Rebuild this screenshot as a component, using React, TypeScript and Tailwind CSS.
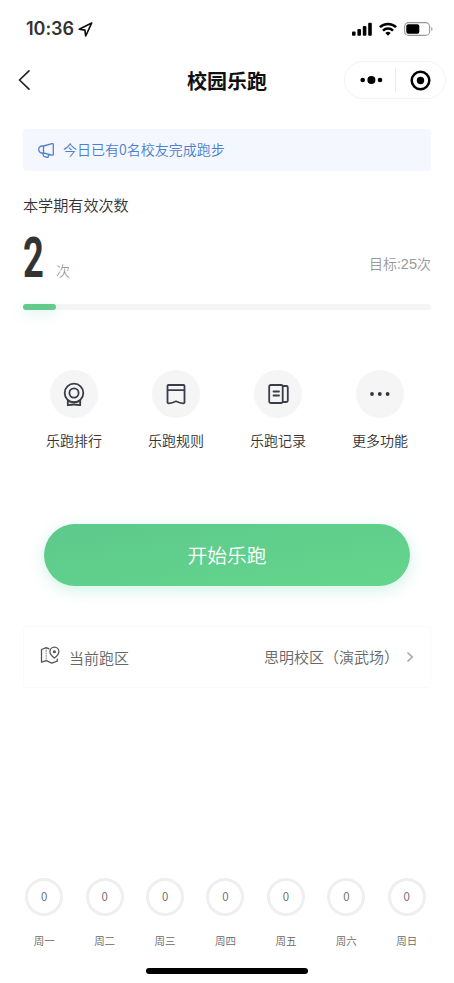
import React from 'react';

const actions = [
  {
    label: '乐跑排行',
    icon: (
      <>
        <circle cx="12" cy="11" r="9.300" />
        <circle cx="12" cy="11" r="4.600" />
        <path d="M5.800 18.500v4.800c4-1 8.400-1 12.400 0v-4.800M6 19.200c3.800 1.300 8.200 1.300 12 0" />
      </>
    ),
  },
  {
    label: '乐跑规则',
    icon: (
      <path d="M4.500 3h15q1 0 1 1v16q0 1.500-1.500 1.300c-2.800 0-4.500-.8-7-2-2.500 1.200-4.200 2-7 2q-1.500.2-1.500-1.300V4q0-1 1-1zM3.500 8.200h17" />
    ),
  },
  {
    label: '乐跑记录',
    icon: (
      <>
        <rect x="3.200" y="3" width="13.500" height="18" rx="1.500" />
        <path d="M7.500 9.500h5.500M7.500 13.500h5.500M17 4h3.300a1.500 1.500 0 0 1 1.500 1.500v13a1.500 1.500 0 0 1-1.500 1.500H17" />
      </>
    ),
  },
  {
    label: '更多功能',
    icon: (
      <g fill="#34363f" stroke="none">
        <circle cx="4" cy="12" r="1.900" />
        <circle cx="11.800" cy="12" r="1.900" />
        <circle cx="19.600" cy="12" r="1.900" />
      </g>
    ),
  },
];

const week = ['周一', '周二', '周三', '周四', '周五', '周六', '周日'];

const StatusBar: React.FC = () => (
  <div className="flex h-14 items-center justify-between pl-[26px] pr-[21px] pt-[2px]">
    <div className="flex items-center gap-1">
      <span className="font-['Inter'] text-[18px] font-semibold leading-none tracking-[-0.05px]">10:36</span>
      <svg width="15" height="15" viewBox="0 0 15 15" fill="none" stroke="#111" strokeWidth="1.700" strokeLinejoin="round">
        <path d="M13.700 1 1.200 7.200l5.700 1 .8 5.800z" />
      </svg>
    </div>
    <div className="flex items-center gap-[7px]">
      <svg width="20" height="14" viewBox="0 0 20 14" fill="#000">
        <rect x="0" y="9.500" width="3.600" height="4.300" rx="1" />
        <rect x="5.400" y="7" width="3.600" height="6.800" rx="1" />
        <rect x="10.800" y="4" width="3.600" height="9.800" rx="1" />
        <rect x="16.200" y=".7" width="3.600" height="13.100" rx="1" />
      </svg>
      <svg width="18" height="14" viewBox="0 0 18 14" fill="none" stroke="#000" strokeWidth="2.500">
        <path d="M.9 5.200a11.600 11.600 0 0 1 16.200 0M4 8.600a7.200 7.200 0 0 1 10 0" />
        <path d="M6.300 11.100a3.900 3.900 0 0 1 5.400 0L9 13.800z" fill="#000" stroke="none" />
      </svg>
      <svg width="29" height="14" viewBox="0 0 29 14" fill="none">
        <rect x=".6" y=".6" width="25" height="12.800" rx="4" stroke="#999" strokeWidth="1.100" />
        <rect x="2.300" y="2.300" width="13" height="9.400" rx="2" fill="#000" />
        <path d="M27.300 4.800c1.600.8 1.600 3.600 0 4.400z" fill="#999" />
      </svg>
    </div>
  </div>
);

const NavBar: React.FC = () => (
  <div className="grid h-12 grid-cols-[102px_1fr_102px] items-center px-2">
    <svg className="ml-[10px]" width="13" height="22" viewBox="0 0 13 22" fill="none" stroke="#222" strokeWidth="1.700" strokeLinecap="round" strokeLinejoin="round">
      <path d="M11 1.800 1.500 11l9.500 9.200" />
    </svg>
    <h1 className="pt-[2px] text-center text-[20px] font-bold leading-none text-[#111]">校园乐跑</h1>
    <div className="flex h-[38px] items-center rounded-full border border-[#f3f3f3]">
      <svg className="ml-[15px]" width="23" height="10" viewBox="0 0 23 10">
        <circle cx="2.700" cy="5" r="2.300" />
        <circle cx="11.400" cy="5" r="4" />
        <circle cx="20" cy="5" r="2.300" />
      </svg>
      <div className="ml-[12px] h-[24px] w-px bg-[#ececec]" />
      <svg className="ml-[14px]" width="21" height="21" viewBox="0 0 21 21">
        <circle cx="10.500" cy="10.500" r="8.800" fill="none" stroke="#000" strokeWidth="2.500" />
        <circle cx="10.500" cy="10.500" r="3.700" />
      </svg>
    </div>
  </div>
);

const App: React.FC = () => {
  return (
    <div className="flex h-[983px] w-[454px] flex-col overflow-hidden bg-white font-['Noto_Sans_CJK_SC',sans-serif] text-[#333]">
      <StatusBar />
      <NavBar />

      {/* Notice */}
      <div className="mx-[23px] mt-[25px] flex h-[42px] items-center rounded bg-[#f4f8fe] pl-[15px] text-[#4d7ed0]">
        <svg width="17" height="17" viewBox="0 0 17 17" fill="none" stroke="currentColor" strokeWidth="1.300" strokeLinejoin="round" strokeLinecap="round">
          <path d="M5.500 4 14 1.600q1.300-.2 1.300 1v9.600q0 1.200-1.300.9L5.500 11H4.200a3.500 3.500 0 0 1 0-7zM5.500 4v7M4.700 11.200l.7 2.400q.3.900 1.200 1.100l2.600.7q1 .2 1.100-.7l.3-2.200" />
        </svg>
        <span className="ml-2 pb-[2px] text-[14px] font-[350] leading-none">今日已有0名校友完成跑步</span>
      </div>

      {/* Semester progress */}
      <div className="mx-[23px] mt-[23px] h-[20px] text-[15.1px] font-[350] leading-[20px]">本学期有效次数</div>
      <div className="mx-[23px] mt-[15px] flex h-[58px] items-end justify-between text-[#999]">
        <div className="flex items-end">
          <span className="w-[33px] origin-left scale-x-[0.66] pb-px font-['Roboto'] text-[55px] font-bold leading-[55px] text-[#333]">2</span>
          <span className="pb-[7px] text-[14px] font-light leading-[20px] text-[#888]">次</span>
        </div>
        <span className="pb-[13px] text-[14px] font-[350] leading-[20px]">
          目标:<span className="font-['Liberation_Sans'] text-[14.5px]">25</span>次
        </span>
      </div>
      <div className="mx-[23px] mt-[17px] h-[6px] rounded-full bg-[#f5f5f5]">
        <div className="h-[6px] w-[8%] rounded-full bg-[#62cb8b] shadow-[0_4px_12px_rgba(98,203,160,0.25)]" />
      </div>

      {/* Shortcuts */}
      <div className="mx-[23px] mt-[60px] grid grid-cols-4">
        {actions.map((item) => (
          <div key={item.label} className="flex flex-col items-center">
            <div className="flex h-12 w-12 items-center justify-center rounded-full bg-[#f5f5f5]">
              <svg width="24" height="24" viewBox="0 0 24 24" fill="none" stroke="#3a3c49" strokeWidth="1.800" strokeLinejoin="round" strokeLinecap="round">
                {item.icon}
              </svg>
            </div>
            <span className="mt-[12px] text-[14px] font-[350] leading-[20px]">{item.label}</span>
          </div>
        ))}
      </div>

      <button className="mx-[44px] mt-[74px] h-[62px] shrink-0 rounded-full bg-gradient-to-br from-[#5dc98c] to-[#65d58c] text-[19.8px] font-[350] leading-none text-white shadow-[0_4px_16px_rgba(90,210,165,0.28)]">
        开始乐跑
      </button>

      {/* Running area */}
      <div className="mx-[23px] mt-[40px] flex h-[62px] items-center rounded-[3px] border border-[#fafafa] pl-[16px] pr-[16px] text-[15px] font-[350] leading-none text-[#666]">
        <svg className="mb-[3px]" width="21" height="19" viewBox="0 0 21 19" fill="none" stroke="#555" strokeWidth="1.300" strokeLinejoin="round" strokeLinecap="round">
          <path d="M9 2.800 6.200 1.700 1.500 3.500v12.700l4.800-1.600 5.500 2.500 5.500-1.900v-2" />
          <path d="M6.200 2v12.300" strokeWidth=".7" strokeDasharray="1 1.500" />
          <path d="M14.400 12c-2.800-2.200-4.500-4.200-4.500-6.300a4.500 4.500 0 0 1 9 0c0 2.100-1.700 4.100-4.500 6.300z" />
          <circle cx="14.400" cy="5.700" r=".9" fill="#555" />
        </svg>
        <span className="ml-2 mt-px">当前跑区</span>
        <span className="mb-[2px] ml-auto">思明校区（演武场）</span>
        <svg className="ml-[7px]" width="8" height="12" viewBox="0 0 8 12" fill="none" stroke="#aaa" strokeWidth="1.700">
          <path d="m1.500 1.500 4.700 4.500-4.700 4.500" />
        </svg>
      </div>

      {/* Weekly counts */}
      <div className="ml-[14px] mr-[17px] mt-auto grid grid-cols-7">
        {week.map((day) => (
          <div key={day} className="flex flex-col items-center text-[10.500px] font-[350] text-[#666]">
            <div className="flex h-[38px] w-[38px] items-center justify-center rounded-full border-[3.500px] border-[#efefef] pb-px text-[11.500px] leading-none">
              0
            </div>
            <span className="mt-[17px] leading-4">{day}</span>
          </div>
        ))}
      </div>
      <div className="mx-auto mb-[9px] mt-[19px] h-[6px] w-[162px] rounded-full bg-black" />
    </div>
  );
};

export default App;
